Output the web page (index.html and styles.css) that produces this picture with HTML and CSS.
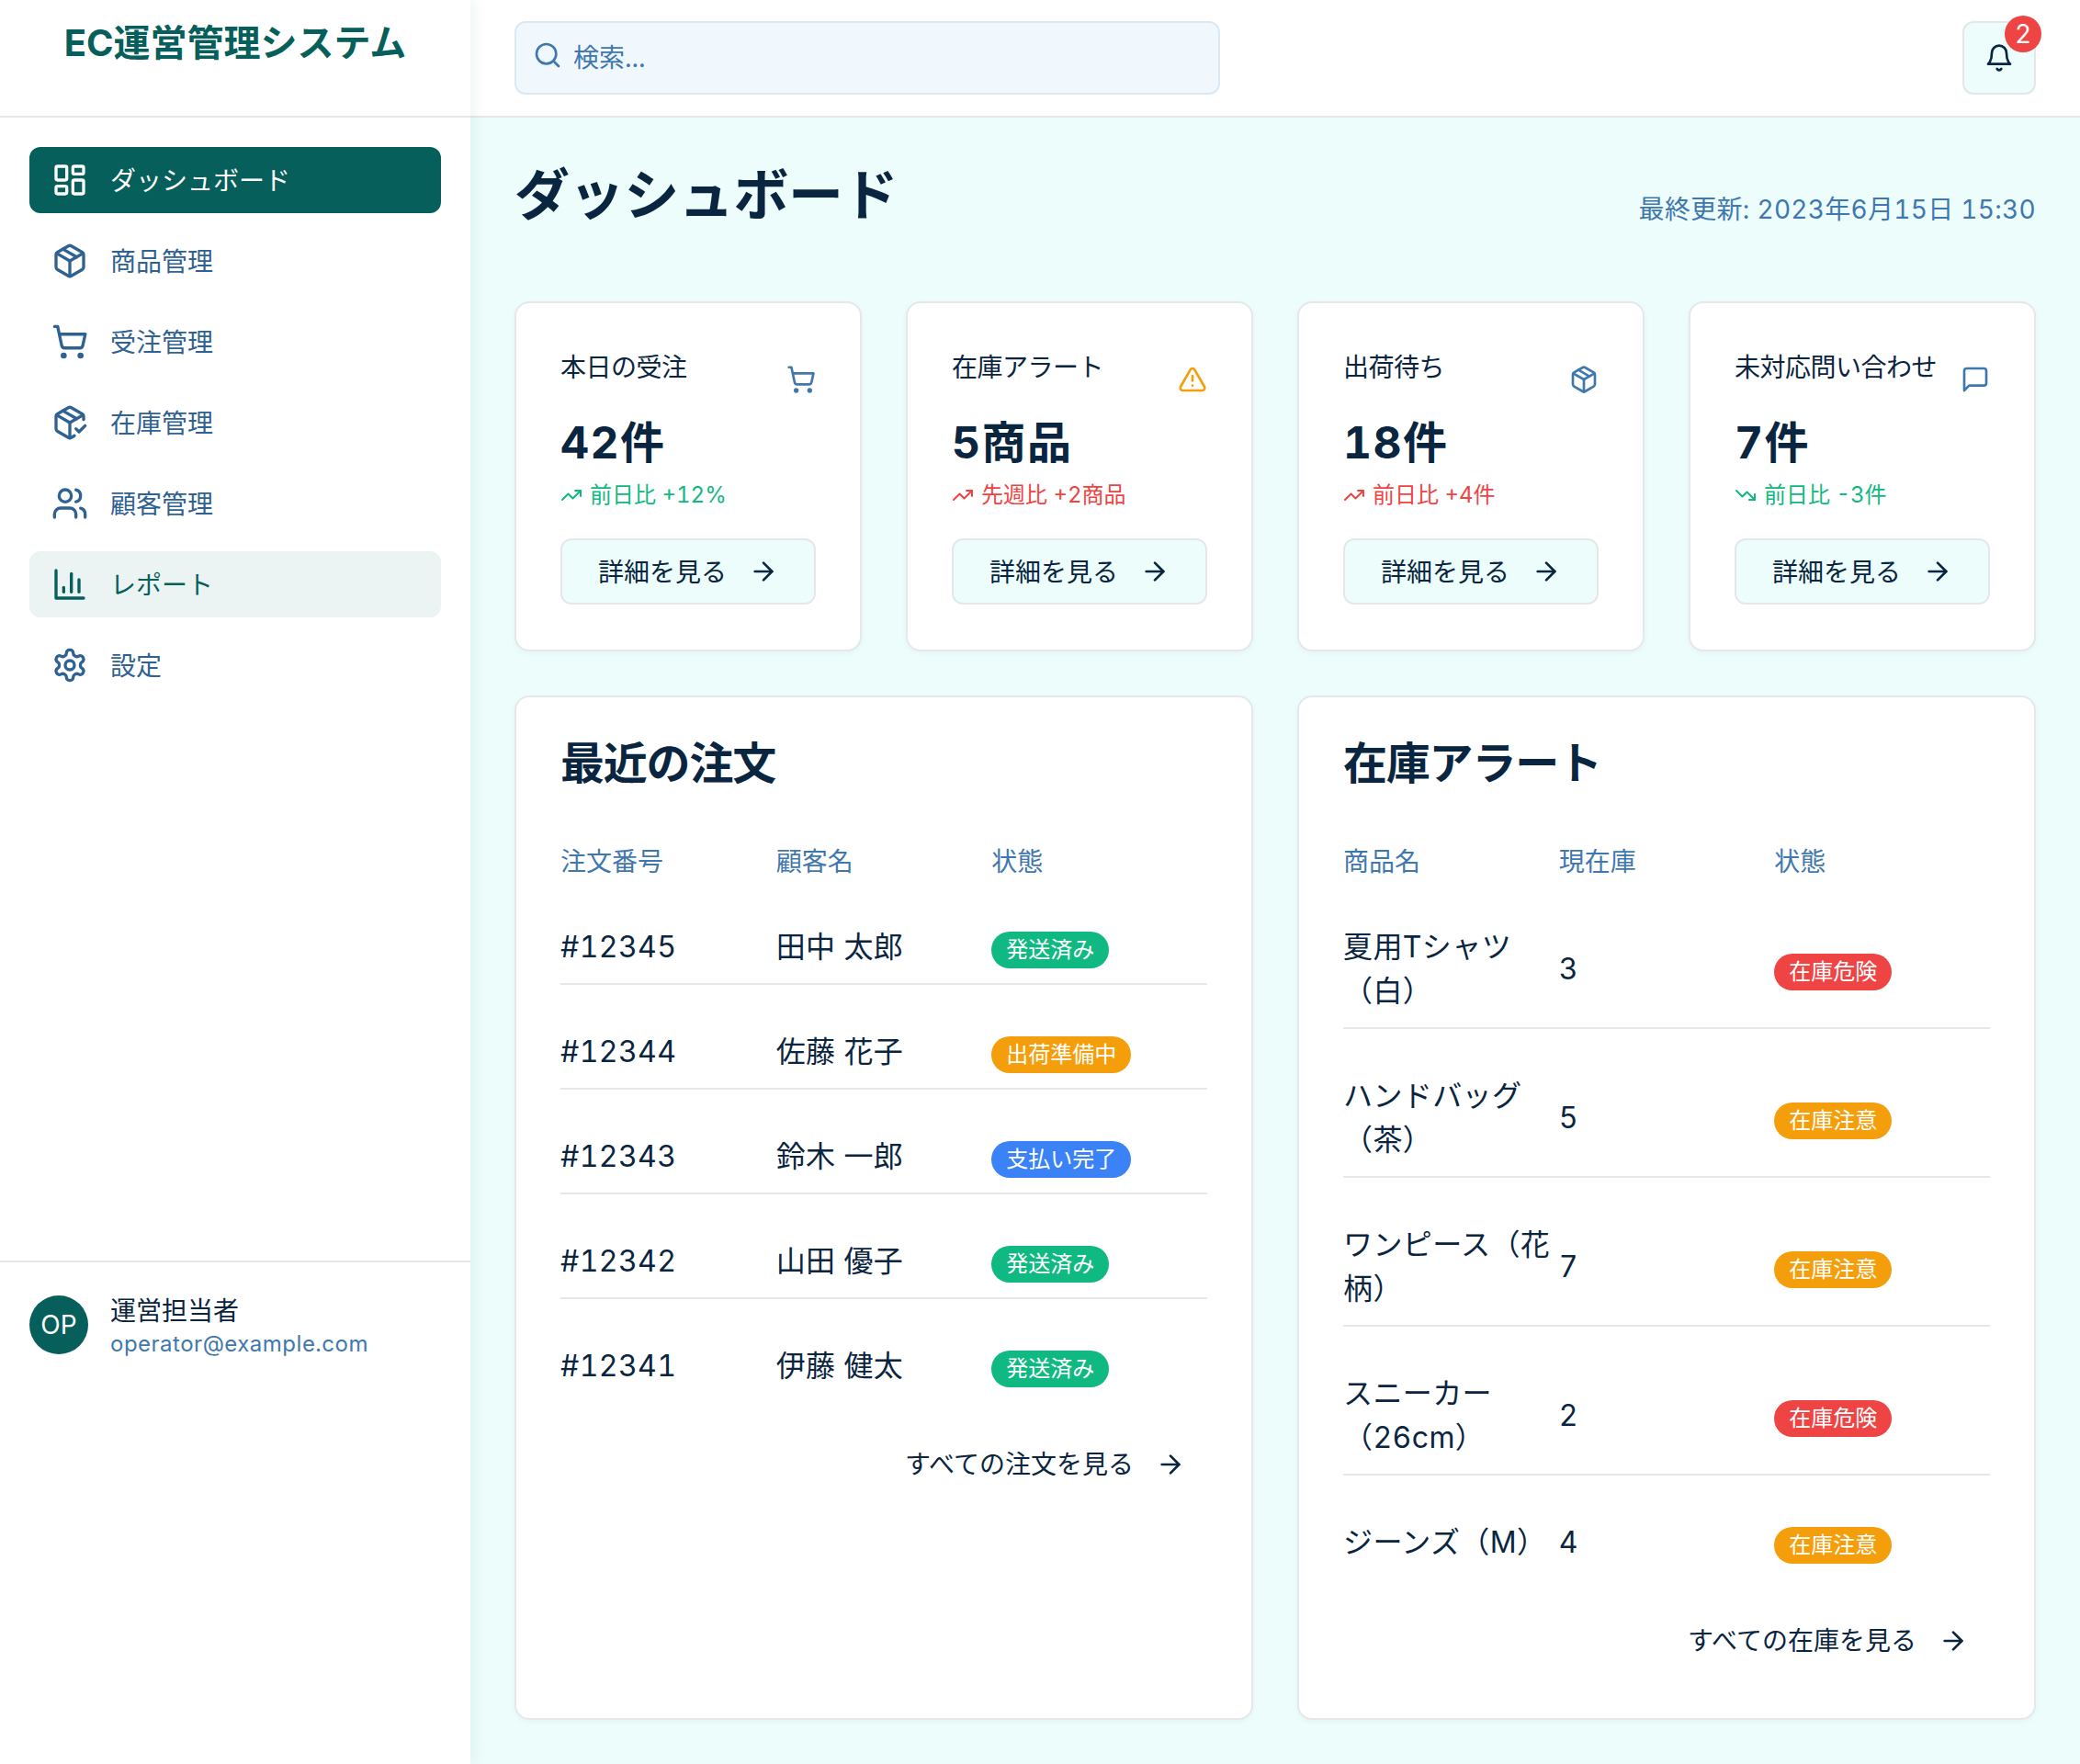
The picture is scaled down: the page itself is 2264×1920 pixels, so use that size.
FILE: index.html
```html
<!DOCTYPE html>
<html lang="ja">
<head>
<meta charset="utf-8">
<title>EC運営管理システム</title>
<link rel="stylesheet" href="styles.css">
</head>
<body>
<svg class="sprite" aria-hidden="true">
  <symbol id="i-dashboard" viewBox="0 0 24 24"><rect x="3" y="3" width="7" height="9" rx="1"/><rect x="14" y="3" width="7" height="5" rx="1"/><rect x="14" y="12" width="7" height="9" rx="1"/><rect x="3" y="16" width="7" height="5" rx="1"/></symbol>
  <symbol id="i-package" viewBox="0 0 24 24"><path d="M11 21.73a2 2 0 0 0 2 0l7-4A2 2 0 0 0 21 16V8a2 2 0 0 0-1-1.73l-7-4a2 2 0 0 0-2 0l-7 4A2 2 0 0 0 3 8v8a2 2 0 0 0 1 1.73z"/><path d="M12 22V12"/><path d="M3.29 7 12 12l8.71-5"/><path d="m7.5 4.27 9 5.15"/></symbol>
  <symbol id="i-cart" viewBox="0 0 24 24"><circle cx="8" cy="21" r="1"/><circle cx="19" cy="21" r="1"/><path d="M2.05 2.05h2l2.66 12.42a2 2 0 0 0 2 1.58h9.78a2 2 0 0 0 1.95-1.57l1.65-7.43H5.12"/></symbol>
  <symbol id="i-package-check" viewBox="0 0 24 24"><path d="m16 16 2 2 4-4"/><path d="M21 10V8a2 2 0 0 0-1-1.73l-7-4a2 2 0 0 0-2 0l-7 4A2 2 0 0 0 3 8v8a2 2 0 0 0 1 1.73l7 4a2 2 0 0 0 2 0l2-1.14"/><path d="m7.5 4.27 9 5.15"/><path d="M3.29 7 12 12l8.71-5"/><path d="M12 22V12"/></symbol>
  <symbol id="i-users" viewBox="0 0 24 24"><path d="M16 21v-2a4 4 0 0 0-4-4H6a4 4 0 0 0-4 4v2"/><circle cx="9" cy="7" r="4"/><path d="M22 21v-2a4 4 0 0 0-3-3.87"/><path d="M16 3.13a4 4 0 0 1 0 7.75"/></symbol>
  <symbol id="i-chart" viewBox="0 0 24 24"><path d="M3 3v18h18"/><path d="M18 17V9"/><path d="M13 17V5"/><path d="M8 17v-3"/></symbol>
  <symbol id="i-settings" viewBox="0 0 24 24"><path d="M12.22 2h-.44a2 2 0 0 0-2 2v.18a2 2 0 0 1-1 1.73l-.43.25a2 2 0 0 1-2 0l-.15-.08a2 2 0 0 0-2.73.73l-.22.38a2 2 0 0 0 .73 2.73l.15.1a2 2 0 0 1 1 1.72v.51a2 2 0 0 1-1 1.74l-.15.09a2 2 0 0 0-.73 2.73l.22.38a2 2 0 0 0 2.73.73l.15-.08a2 2 0 0 1 2 0l.43.25a2 2 0 0 1 1 1.73V20a2 2 0 0 0 2 2h.44a2 2 0 0 0 2-2v-.18a2 2 0 0 1 1-1.73l.43-.25a2 2 0 0 1 2 0l.15.08a2 2 0 0 0 2.73-.73l.22-.39a2 2 0 0 0-.73-2.73l-.15-.08a2 2 0 0 1-1-1.74v-.5a2 2 0 0 1 1-1.74l.15-.09a2 2 0 0 0 .73-2.73l-.22-.38a2 2 0 0 0-2.73-.73l-.15.08a2 2 0 0 1-2 0l-.43-.25a2 2 0 0 1-1-1.73V4a2 2 0 0 0-2-2z"/><circle cx="12" cy="12" r="3"/></symbol>
  <symbol id="i-alert" viewBox="0 0 24 24"><path d="m21.73 18-8-14a2 2 0 0 0-3.48 0l-8 14A2 2 0 0 0 4 21h16a2 2 0 0 0 1.73-3Z"/><path d="M12 9v4"/><path d="M12 17h.01"/></symbol>
  <symbol id="i-message" viewBox="0 0 24 24"><path d="M21 15a2 2 0 0 1-2 2H7l-4 4V5a2 2 0 0 1 2-2h14a2 2 0 0 1 2 2z"/></symbol>
  <symbol id="i-up" viewBox="0 0 24 24"><path d="M22 7 13.5 15.5 8.5 10.5 2 17"/><path d="M16 7h6v6"/></symbol>
  <symbol id="i-down" viewBox="0 0 24 24"><path d="M22 17 13.5 8.5 8.5 13.5 2 7"/><path d="M16 17h6v-6"/></symbol>
  <symbol id="i-bell" viewBox="0 0 24 24"><path d="M6 8a6 6 0 0 1 12 0c0 7 3 9 3 9H3s3-2 3-9"/><path d="M10.3 21a1.94 1.94 0 0 0 3.4 0"/></symbol>
  <symbol id="i-search" viewBox="0 0 24 24"><circle cx="11" cy="11" r="8"/><path d="m21 21-4.3-4.3"/></symbol>
  <symbol id="i-arrow" viewBox="0 0 24 24"><path d="M5 12h14"/><path d="m12 5 7 7-7 7"/></symbol>
</svg>

<div class="app">
  <aside class="sidebar">
    <div class="logo">EC運営管理システム</div>
    <nav class="nav">
      <a class="nav-item active"><svg class="nav-icon"><use href="#i-dashboard"/></svg><span>ダッシュボード</span></a>
      <a class="nav-item"><svg class="nav-icon"><use href="#i-package"/></svg><span>商品管理</span></a>
      <a class="nav-item"><svg class="nav-icon"><use href="#i-cart"/></svg><span>受注管理</span></a>
      <a class="nav-item"><svg class="nav-icon"><use href="#i-package-check"/></svg><span>在庫管理</span></a>
      <a class="nav-item"><svg class="nav-icon"><use href="#i-users"/></svg><span>顧客管理</span></a>
      <a class="nav-item hover"><svg class="nav-icon"><use href="#i-chart"/></svg><span>レポート</span></a>
      <a class="nav-item"><svg class="nav-icon"><use href="#i-settings"/></svg><span>設定</span></a>
    </nav>
    <div class="user">
      <div class="avatar">OP</div>
      <div class="user-text">
        <div class="user-name">運営担当者</div>
        <div class="user-mail">operator@example.com</div>
      </div>
    </div>
  </aside>

  <div class="main">
    <header class="topbar">
      <label class="search"><svg class="search-icon"><use href="#i-search"/></svg><span>検索...</span></label>
      <button class="bell"><svg class="bell-icon"><use href="#i-bell"/></svg><span class="badge-count">2</span></button>
    </header>

    <main class="content">
      <div class="page-head">
        <h1>ダッシュボード</h1>
        <div class="updated">最終更新: 2023年6月15日 15:30</div>
      </div>

      <section class="stats">
        <article class="card">
          <div class="card-head"><h2>本日の受注</h2><svg class="card-icon blue"><use href="#i-cart"/></svg></div>
          <div class="value">42件</div>
          <div class="change good"><svg class="change-icon"><use href="#i-up"/></svg><span>前日比 +12%</span></div>
          <button class="detail"><span>詳細を見る</span><svg class="arrow"><use href="#i-arrow"/></svg></button>
        </article>
        <article class="card">
          <div class="card-head"><h2>在庫アラート</h2><svg class="card-icon amber"><use href="#i-alert"/></svg></div>
          <div class="value">5商品</div>
          <div class="change bad"><svg class="change-icon"><use href="#i-up"/></svg><span>先週比 +2商品</span></div>
          <button class="detail"><span>詳細を見る</span><svg class="arrow"><use href="#i-arrow"/></svg></button>
        </article>
        <article class="card">
          <div class="card-head"><h2>出荷待ち</h2><svg class="card-icon blue"><use href="#i-package"/></svg></div>
          <div class="value">18件</div>
          <div class="change bad"><svg class="change-icon"><use href="#i-up"/></svg><span>前日比 +4件</span></div>
          <button class="detail"><span>詳細を見る</span><svg class="arrow"><use href="#i-arrow"/></svg></button>
        </article>
        <article class="card">
          <div class="card-head"><h2>未対応問い合わせ</h2><svg class="card-icon blue"><use href="#i-message"/></svg></div>
          <div class="value">7件</div>
          <div class="change good"><svg class="change-icon"><use href="#i-down"/></svg><span>前日比 -3件</span></div>
          <button class="detail"><span>詳細を見る</span><svg class="arrow"><use href="#i-arrow"/></svg></button>
        </article>
      </section>

      <section class="panels">
        <article class="panel">
          <h3>最近の注文</h3>
          <table>
            <thead><tr><th>注文番号</th><th>顧客名</th><th>状態</th></tr></thead>
            <tbody>
              <tr><td>#12345</td><td>田中 太郎</td><td><span class="pill green">発送済み</span></td></tr>
              <tr><td>#12344</td><td>佐藤 花子</td><td><span class="pill amber-bg">出荷準備中</span></td></tr>
              <tr><td>#12343</td><td>鈴木 一郎</td><td><span class="pill blue-bg">支払い完了</span></td></tr>
              <tr><td>#12342</td><td>山田 優子</td><td><span class="pill green">発送済み</span></td></tr>
              <tr><td>#12341</td><td>伊藤 健太</td><td><span class="pill green">発送済み</span></td></tr>
            </tbody>
          </table>
          <div class="more"><a class="more-link"><span>すべての注文を見る</span><svg class="arrow"><use href="#i-arrow"/></svg></a></div>
        </article>
        <article class="panel">
          <h3>在庫アラート</h3>
          <table>
            <thead><tr><th>商品名</th><th>現在庫</th><th>状態</th></tr></thead>
            <tbody>
              <tr><td>夏用Tシャツ（白）</td><td>3</td><td><span class="pill red">在庫危険</span></td></tr>
              <tr><td>ハンドバッグ（茶）</td><td>5</td><td><span class="pill amber-bg">在庫注意</span></td></tr>
              <tr><td>ワンピース（花柄）</td><td>7</td><td><span class="pill amber-bg">在庫注意</span></td></tr>
              <tr><td>スニーカー（26cm）</td><td>2</td><td><span class="pill red">在庫危険</span></td></tr>
              <tr><td>ジーンズ（M）</td><td>4</td><td><span class="pill amber-bg">在庫注意</span></td></tr>
            </tbody>
          </table>
          <div class="more"><a class="more-link"><span>すべての在庫を見る</span><svg class="arrow"><use href="#i-arrow"/></svg></a></div>
        </article>
      </section>
    </main>
  </div>
</div>
</body>
</html>
```

FILE: styles.css
```css
* { box-sizing: border-box; }

html, body { margin: 0; padding: 0; }

body {
  font-family: Inter, "Noto Sans CJK JP", sans-serif;
  font-size: 28px;
  line-height: 40px;
  font-variant-numeric: tabular-nums;
  color: #0a2540;
  background: #edfdfc;
}

.sprite { display: none; }

svg {
  fill: none;
  stroke: currentColor;
  stroke-width: 2;
  stroke-linecap: round;
  stroke-linejoin: round;
  flex: none;
}

.app {
  display: grid;
  grid-template-columns: 512px 1fr;
  height: 1920px;
}

/* Sidebar */
.sidebar {
  position: relative;
  z-index: 1;
  background: #fff;
  box-shadow: 4px 0 16px rgba(6, 95, 91, 0.07);
}

.logo {
  height: 128px;
  padding-top: 17px;
  border-bottom: 2px solid #e5e7eb;
  font-size: 40px;
  line-height: 60px;
  font-weight: 700;
  color: #065f5b;
  text-align: center;
}

.nav {
  display: flex;
  flex-direction: column;
  gap: 16px;
  height: 1244px;
  padding: 32px;
}

.nav-item {
  display: flex;
  align-items: center;
  gap: 24px;
  height: 72px;
  padding: 0 24px;
  border-radius: 12px;
  color: #2f6193;
}

.nav-item span { padding-top: 2px; }

.nav-icon { width: 40px; height: 40px; }

.nav-item.active { background: #065f5b; color: #fff; }

.nav-item.hover { background: #ebf4f3; color: #065f5b; }

.user {
  display: flex;
  align-items: flex-start;
  gap: 24px;
  padding: 36px 32px;
  border-top: 2px solid #e5e7eb;
}

.avatar {
  display: flex;
  align-items: center;
  justify-content: center;
  width: 64px;
  height: 64px;
  border-radius: 50%;
  background: #065f5b;
  color: #fff;
}

.user-text { margin-top: -1px; }

.user-name { line-height: 36px; }

.user-mail {
  font-size: 24px;
  line-height: 36px;
  letter-spacing: 0.5px;
  color: #3f78ae;
}

/* Top bar */
.main { display: flex; flex-direction: column; min-width: 0; }

.topbar {
  display: flex;
  align-items: center;
  justify-content: space-between;
  height: 128px;
  padding: 0 48px;
  background: #fff;
  border-bottom: 2px solid #e5e7eb;
}

.search {
  display: flex;
  align-items: center;
  gap: 12px;
  width: 768px;
  height: 80px;
  padding: 0 18px;
  background: #f0f7fd;
  border: 2px solid #dbe9f5;
  border-radius: 12px;
  color: #3f78ae;
}

.search-icon { width: 32px; height: 32px; margin-top: -6px; }

.bell {
  position: relative;
  display: flex;
  align-items: center;
  justify-content: center;
  width: 80px;
  height: 80px;
  padding: 0;
  background: #edfdfc;
  border: 2px solid #e5e7eb;
  border-radius: 12px;
  color: #0a2540;
}

.bell-icon { width: 32px; height: 32px; }

.badge-count {
  position: absolute;
  top: -8px;
  right: -8px;
  width: 40px;
  height: 40px;
  border-radius: 50%;
  background: #ef4444;
  color: #fff;
  font: 400 28px/40px Inter, sans-serif;
  text-align: center;
}

/* Content */
.content {
  flex: 1;
  display: flex;
  flex-direction: column;
  gap: 48px;
  padding: 48px;
  min-height: 0;
}

.page-head {
  display: flex;
  align-items: flex-end;
  justify-content: space-between;
  margin-bottom: 32px;
}

h1 {
  margin: 0;
  font-size: 60px;
  line-height: 72px;
  font-weight: 700;
  letter-spacing: -0.4px;
}

.updated { color: #3f78ae; font-size: 28px; letter-spacing: 0.3px; }

.stats {
  display: grid;
  grid-template-columns: repeat(4, 1fr);
  gap: 48px;
}

.card {
  padding: 48px 48px 49px;
  background: #fff;
  border: 2px solid #e5e7eb;
  border-radius: 16px;
  box-shadow: 0 2px 6px rgba(0, 0, 0, 0.04);
}

.card-head {
  display: flex;
  align-items: center;
  justify-content: space-between;
  gap: 8px;
  white-space: nowrap;
}

h2 {
  margin: 0 0 30px;
  padding-top: 2px;
  font-size: 28px;
  line-height: 40px;
  font-weight: 400;
  letter-spacing: -0.5px;
}

.card-icon { width: 32px; height: 32px; margin-top: -3px; }

.blue { color: #3f78ae; }

.amber { color: #f59e0b; }

.value { font-size: 48px; line-height: 64px; font-weight: 700; letter-spacing: 1.5px; }

.change {
  display: flex;
  align-items: center;
  gap: 8px;
  margin-top: 9px;
  font-size: 24px;
  line-height: 32px;
}

.change-icon { width: 24px; height: 24px; }

.good { color: #10b981; }

.bad { color: #ef4444; }

.detail {
  display: flex;
  align-items: center;
  justify-content: center;
  gap: 24px;
  width: 100%;
  height: 72px;
  margin-top: 31px;
  padding: 0;
  background: #edfdfc;
  border: 2px solid #e5e7eb;
  border-radius: 12px;
  color: #0a2540;
  font: inherit;
}

.detail span { padding-top: 2px; }

.arrow { width: 32px; height: 32px; }

.panels {
  flex: 1;
  display: grid;
  grid-template-columns: repeat(2, 1fr);
  gap: 48px;
  min-height: 0;
}

.panel {
  padding: 48px;
  background: #fff;
  border: 2px solid #e5e7eb;
  border-radius: 16px;
  box-shadow: 0 2px 6px rgba(0, 0, 0, 0.04);
}

h3 {
  margin: 0 0 64px;
  font-size: 48px;
  line-height: 48px;
  font-weight: 700;
  letter-spacing: -1.2px;
}

table {
  width: 100%;
  table-layout: fixed;
  border-collapse: collapse;
}

th {
  height: 39px;
  padding: 0;
  font-weight: 400;
  line-height: 39px;
  text-align: left;
  color: #3f78ae;
}

td {
  padding: 49px 0 15px;
  font-size: 32px;
  line-height: 48px;
  letter-spacing: 0.4px;
}

tbody tr { border-bottom: 2px solid #e5e7eb; }

tbody tr:last-child { border-bottom: 0; }

.pill {
  display: inline-block;
  height: 40px;
  margin-top: 7px;
  padding: 0 16px;
  border-radius: 20px;
  font-size: 24px;
  line-height: 40px;
  letter-spacing: 0;
  color: #fff;
  vertical-align: top;
}

.green { background: #10b981; }

.amber-bg { background: #f59e0b; }

.blue-bg { background: #3b82f6; }

.red { background: #ef4444; }

.more {
  display: flex;
  justify-content: flex-end;
  margin-top: 32px;
}

.more-link {
  display: flex;
  align-items: center;
  gap: 24px;
  height: 72px;
  padding: 0 24px;
}
```
